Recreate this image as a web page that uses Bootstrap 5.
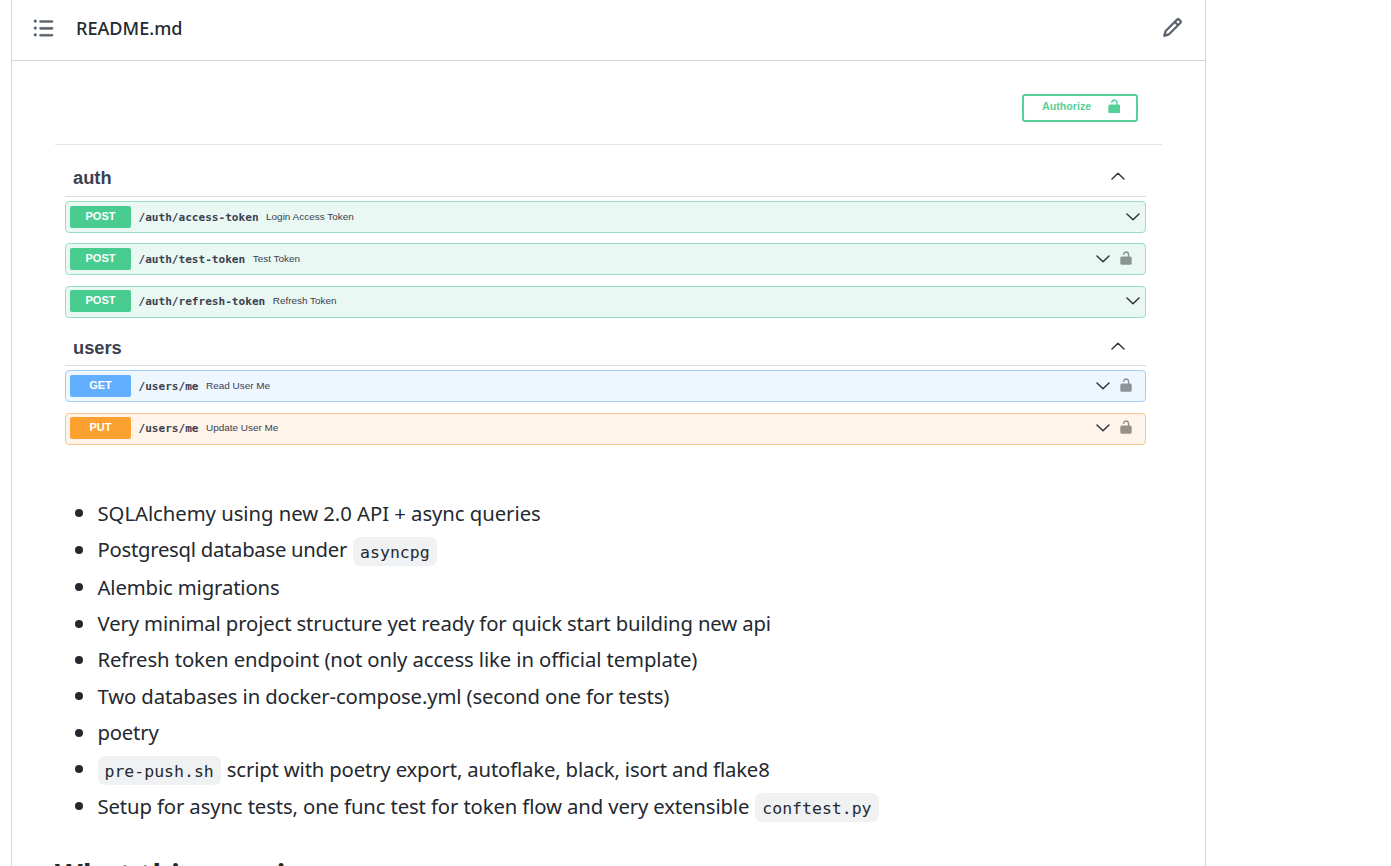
<!DOCTYPE html>
<html lang="en">
<head>
<meta charset="utf-8">
<title>README.md</title>
<link href="https://cdn.jsdelivr.net/npm/bootstrap@5.3.0/dist/css/bootstrap.min.css" rel="stylesheet">
<style>
body{font-family:"Noto Sans","Open Sans",sans-serif;color:#24292f;background:#fff;overflow:hidden;height:866px}
.panel{width:1195px;height:866px;overflow:hidden;margin-left:11px;border:solid #d0d7de;border-width:0 1px}
.panel-head{height:61px;border-bottom:1px solid #d0d7de;padding:0 22px 5px 20px}
.panel-head svg{display:block;stroke:#57606a;stroke-width:.25}
.fname{font-size:18.1px;font-weight:500;line-height:24px;margin-left:21px;white-space:nowrap}
.api{width:1107px;margin-left:43px;font-family:"Liberation Sans",Arial,sans-serif;color:#3b4151}
.auth-bar{height:84px;border-bottom:1.5px solid #e6e6e6;padding:32.5px 24px 0 0}
.auth-btn{width:116px;height:28px;border:2px solid #49cc90;border-radius:3px;color:#49cc90;font-size:10.7px;font-weight:700;padding:0 16px 3px 18px;opacity:.92;background:#fff}
.sect{padding:0 16px 0 10px}
.tag-row{height:52px;border-bottom:1.5px solid #dcdee0;padding:13px 20px 0 8px;font-size:18.3px;font-weight:700}
.tag-row span{margin-top:6px}
.tag-row svg{margin-right:1px}
.tag-row.second{height:38.5px;padding-top:0}
.op{height:32px;border:1.5px solid var(--c);border-radius:4px;background:var(--bg);padding:0 5px 1px 4px;margin-bottom:10.3px}
.op.locked{padding-right:13px}
.lk{margin-left:10px;margin-bottom:2px;color:#000;opacity:.4}
.op-post{--c:#97dfbf;--solid:#49cc90;--bg:#e9f8f2}
.op-get{--c:#a4cdfb;--solid:#61affe;--bg:#eef6fe}
.op-put{--c:#fac48a;--solid:#fca130;--bg:#fef4ea}
.verb{width:61px;height:22px;border-radius:2px;background:var(--solid);color:#fff;font-size:11px;font-weight:700;line-height:21.5px;text-align:center}
.route{font:700 11.08px "DejaVu Sans Mono",monospace;margin-left:7.5px;margin-right:7.5px;padding-top:1px}
.desc{font-size:9.95px;white-space:nowrap;padding-top:1px}
.feat{margin:50px 0 0 63px;padding:0;list-style:none;font-size:20.3px;line-height:30px}
.feat li{height:36.35px;display:flex;align-items:center;white-space:nowrap;letter-spacing:var(--ls,-.13px)}
.feat li.has-code{height:37.5px;padding-bottom:1px}
.feat li::before{content:"";flex:none;width:8px;height:8px;border-radius:50%;background:#24292f;margin-right:14.5px;margin-top:1px}
.feat code{font:16.5px/31px "DejaVu Sans Mono",monospace;letter-spacing:0;color:#24292f;background:#eff1f3;border-radius:7px;padding:0 7px;height:29px;display:inline-block;margin-top:4px}
.feat span+code{margin-left:6px}
.feat code+span{margin-left:6px}
.next-h{font-size:28.5px;font-weight:700;line-height:40px;letter-spacing:.35px;margin:30px 0 0 43px;white-space:nowrap}
</style>
</head>
<body>
<svg class="d-none"><defs>
<symbol id="down" viewBox="0 0 14 8"><path d="M1 1l6 5.7L13 1" fill="none" stroke="#30343b" stroke-width="1.5" stroke-linecap="round" stroke-linejoin="round"/></symbol>
<symbol id="up" viewBox="0 0 14 8"><path d="M1 7l6-5.7L13 7" fill="none" stroke="#30343b" stroke-width="1.5" stroke-linecap="round" stroke-linejoin="round"/></symbol>
<symbol id="lock" viewBox="0 0 12 14"><path d="M1.8 5.4H7.9V3.7C7.9 1.4 4.6 1.4 4.4 3.4a.7.7 0 0 1-1.4-.2C3.3-.8 9.3-.7 9.3 3.7V5.4h.9a1.5 1.5 0 0 1 1.5 1.5v5.4a1.5 1.5 0 0 1-1.5 1.5H1.8a1.5 1.5 0 0 1-1.5-1.5V6.9a1.5 1.5 0 0 1 1.5-1.5Z" fill="currentColor"/></symbol>
</defs></svg>
<main class="panel">
<header class="panel-head d-flex align-items-center">
<svg width="23" height="22" viewBox="0 0 16 16" fill="#57606a"><path d="M5.75 2.5h8.5a.75.75 0 0 1 0 1.5h-8.5a.75.75 0 0 1 0-1.5Zm0 5h8.5a.75.75 0 0 1 0 1.5h-8.5a.75.75 0 0 1 0-1.5Zm0 5h8.5a.75.75 0 0 1 0 1.5h-8.5a.75.75 0 0 1 0-1.5ZM2 14a1 1 0 1 1 0-2 1 1 0 0 1 0 2Zm1-6a1 1 0 1 1-2 0 1 1 0 0 1 2 0ZM2 4a1 1 0 1 1 0-2 1 1 0 0 1 0 2Z"/></svg>
<span class="fname">README.md</span>
<svg class="ms-auto" width="21" height="21" viewBox="0 0 16 16" fill="#57606a"><path d="M11.013 1.427a1.75 1.75 0 0 1 2.474 0l1.086 1.086a1.75 1.75 0 0 1 0 2.474l-8.61 8.61c-.21.21-.47.364-.756.445l-3.251.93a.75.75 0 0 1-.927-.928l.929-3.25c.081-.286.235-.547.445-.758l8.61-8.61Zm.176 4.823L9.75 4.81l-6.286 6.287a.253.253 0 0 0-.064.108l-.558 1.953 1.953-.558a.253.253 0 0 0 .108-.064Zm1.238-3.763a.25.25 0 0 0-.354 0L10.811 3.75l1.439 1.44 1.263-1.263a.25.25 0 0 0 0-.354Z"/></svg>
</header>
<section class="api">
<div class="auth-bar d-flex justify-content-end"><div class="auth-btn d-flex align-items-center justify-content-between">Authorize<svg width="12.5" height="14.5"><use href="#lock"/></svg></div></div>
<div class="sect">
<div class="tag-row d-flex justify-content-between"><span>auth</span><svg class="mt-2" width="14" height="20" viewBox="0 0 14 20"><use href="#up" width="14" height="8" y="6"/></svg></div>
<div class="ops pt-1">
<div class="op op-post d-flex align-items-center"><span class="verb">POST</span><span class="route">/auth/access-token</span><span class="desc">Login Access Token</span><svg class="ms-auto" width="14" height="8"><use href="#down"/></svg></div>
<div class="op op-post locked d-flex align-items-center"><span class="verb">POST</span><span class="route">/auth/test-token</span><span class="desc">Test Token</span><svg class="ms-auto" width="14" height="8"><use href="#down"/></svg><svg class="lk" width="12" height="14"><use href="#lock"/></svg></div>
<div class="op op-post d-flex align-items-center"><span class="verb">POST</span><span class="route">/auth/refresh-token</span><span class="desc">Refresh Token</span><svg class="ms-auto" width="14" height="8"><use href="#down"/></svg></div>
</div>
<div class="tag-row second d-flex justify-content-between"><span>users</span><svg class="mt-2" width="14" height="20" viewBox="0 0 14 20"><use href="#up" width="14" height="8" y="6"/></svg></div>
<div class="ops pt-1">
<div class="op op-get locked d-flex align-items-center"><span class="verb">GET</span><span class="route">/users/me</span><span class="desc">Read User Me</span><svg class="ms-auto" width="14" height="8"><use href="#down"/></svg><svg class="lk" width="12" height="14"><use href="#lock"/></svg></div>
<div class="op op-put locked d-flex align-items-center"><span class="verb">PUT</span><span class="route">/users/me</span><span class="desc">Update User Me</span><svg class="ms-auto" width="14" height="8"><use href="#down"/></svg><svg class="lk" width="12" height="14"><use href="#lock"/></svg></div>
</div>
</div>
</section>
<ul class="feat">
<li style="--ls:-.04px"><span>SQLAlchemy using new 2.0 API + async queries</span></li>
<li class="has-code" style="--ls:-.27px"><span>Postgresql database under</span><code>asyncpg</code></li>
<li><span>Alembic migrations</span></li>
<li><span>Very minimal project structure yet ready for quick start building new api</span></li>
<li style="--ls:-.1px"><span>Refresh token endpoint (not only access like in official template)</span></li>
<li><span>Two databases in docker-compose.yml (second one for tests)</span></li>
<li style="--ls:-.2px"><span>poetry</span></li>
<li class="has-code" style="--ls:-.16px"><code>pre-push.sh</code><span>script with poetry export, autoflake, black, isort and flake8</span></li>
<li style="--ls:-.12px"><span>Setup for async tests, one func test for token flow and very extensible</span><code>conftest.py</code></li>
</ul>
<h2 class="next-h">What this repo is</h2>
</main>
<script src="https://cdn.jsdelivr.net/npm/bootstrap@5.3.0/dist/js/bootstrap.bundle.min.js"></script>
</body>
</html>
